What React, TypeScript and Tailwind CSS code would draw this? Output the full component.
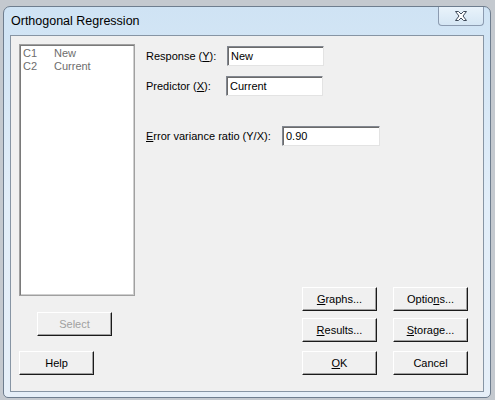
import type { ReactNode } from "react";

function Btn({ children, disabled, className = "" }: { children: ReactNode; disabled?: boolean; className?: string }) {
  return (
    <button
      type="button"
      disabled={disabled}
      className={`flex h-[24px] w-[75px] items-center justify-center border border-b-[#1a1a1a] border-l-white border-r-[#1a1a1a] border-t-white bg-[#f0f0f0] text-[11px] shadow-[inset_-1px_-1px_0_#a0a0a0] ${
        disabled ? "text-[#a0a0a0]" : "text-black"
      } ${className}`}
    >
      {children}
    </button>
  );
}

function Field({ value, width }: { value: string; width: string }) {
  return (
    <div
      className={`flex h-[20px] items-center border border-b-[#e3e3e3] border-l-[#828790] border-r-[#e3e3e3] border-t-[#828790] bg-white pl-[3px] text-[11px] text-black shadow-[inset_1px_1px_0_#6b6b6b] ${width}`}
    >
      {value}
    </div>
  );
}

export default function App() {
  return (
    <div
      className="h-[400px] w-[495px] overflow-hidden bg-[#c4c9cf] pb-[2px] pl-[3px] pr-[4px] pt-[6px]"
      style={{ fontFamily: '"Liberation Sans", Arial, sans-serif' }}
    >
      <div className="flex h-full flex-col rounded-b-[5px] rounded-t-[7px] border border-[#6e7d8e] bg-gradient-to-b from-[#cfe3f4] via-[#e2eef9] to-[#e6eff8]">
        {/* title bar */}
        <div className="flex h-[28px] shrink-0">
          <span className="self-center pl-[7px] text-[12.5px] text-black">Orthogonal Regression</span>
          <div className="ml-auto mr-[6px] flex h-[19px] w-[46px] items-center justify-center self-start rounded-b-[4px] border border-t-0 border-[#8c9bb0] bg-gradient-to-b from-[#e9f3fb] to-[#d5e6f4]">
            <svg width="14" height="12" viewBox="0 0 14 12">
              <path
                d="M1.5 1.5h3L7 4l2.5-2.5h3L9 6l3.5 4.5h-3L7 8l-2.5 2.5h-3L5 6z"
                fill="#ffffff"
                stroke="#3e4a5a"
                strokeWidth="1"
                strokeLinejoin="round"
              />
            </svg>
          </div>
        </div>

        {/* client area */}
        <div className="mx-[6px] mb-[5px] flex-1 border border-[#8795a4] bg-[#f0f0f0] pl-[8px] pt-[8px]">
          <div className="flex items-start">
            <div className="flex w-[116px] flex-col">
              <div className="h-[252px] border border-[#a0a0a0] bg-white pl-[3px] pt-[2px] text-[11px] leading-[13px] text-[#6d6d6d] shadow-[inset_1px_1px_0_#7a7a7a,inset_-1px_-1px_0_#cfcfcf]">
                <div className="flex">
                  <span className="w-[31px]">C1</span>
                  <span>New</span>
                </div>
                <div className="flex">
                  <span className="w-[31px]">C2</span>
                  <span>Current</span>
                </div>
              </div>
              <Btn disabled className="ml-[18px] mt-[16px] h-[22px]">
                Select
              </Btn>
            </div>

            <div className="ml-[11px] flex flex-col text-[11px] text-black">
              <div className="mt-[2px] flex items-center">
                <span className="w-[81px]">
                  Response (<u>Y</u>):
                </span>
                <Field value="New" width="w-[97px]" />
              </div>
              <div className="mt-[10px] flex items-center">
                <span className="w-[80px]">
                  Predictor (<u>X</u>):
                </span>
                <Field value="Current" width="w-[97px]" />
              </div>
              <div className="mt-[30px] flex items-center">
                <span className="w-[136px]">
                  <u>E</u>rror variance ratio (Y/X):
                </span>
                <Field value="0.90" width="w-[98px]" />
              </div>

              <div className="ml-[156px] mt-[141px] grid grid-cols-[75px_75px] gap-x-[16px] gap-y-[7px]">
                <Btn>
                  <u>G</u>raphs...
                </Btn>
                <Btn>
                  Optio<u>n</u>s...
                </Btn>
                <Btn>
                  <u>R</u>esults...
                </Btn>
                <Btn>
                  <u>S</u>torage...
                </Btn>
              </div>
            </div>
          </div>

          <div className="mt-[9px] flex">
            <Btn>Help</Btn>
            <Btn className="ml-[208px]">
              <u>O</u>K
            </Btn>
            <Btn className="ml-[16px]">Cancel</Btn>
          </div>
        </div>
      </div>
    </div>
  );
}
